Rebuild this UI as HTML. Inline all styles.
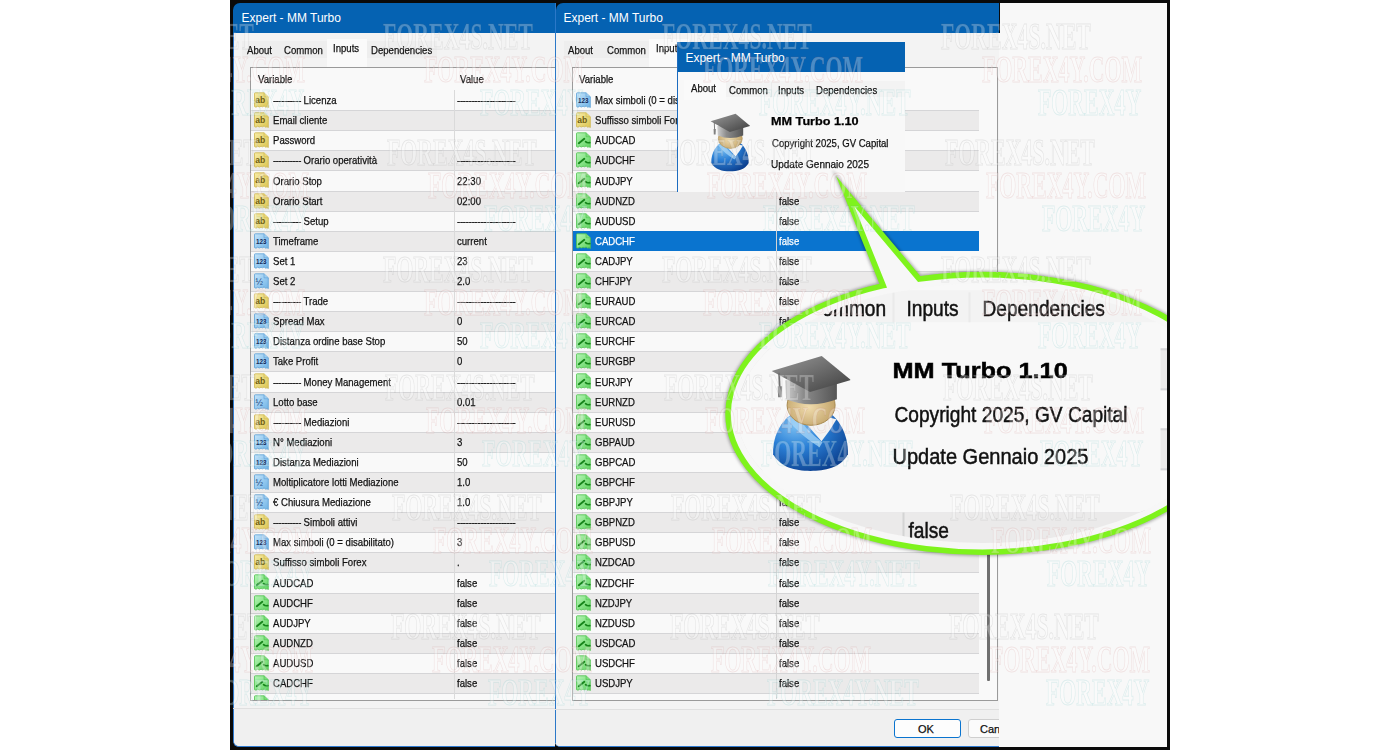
<!DOCTYPE html><html><head><meta charset="utf-8"><style>
html,body{margin:0;padding:0;width:1400px;height:750px;overflow:hidden;background:#fff;position:relative}
.r{position:absolute}
.t{position:absolute;white-space:nowrap;font-family:"Liberation Sans",sans-serif;transform-origin:0 0;-webkit-text-stroke:0.25px currentColor}
.d{letter-spacing:-0.45px}.dv{letter-spacing:-0.3px}
.ic{position:absolute;overflow:visible}
.wm{position:absolute;white-space:nowrap;font-family:"Liberation Serif",serif;font-weight:bold;font-size:38px;line-height:38px;color:rgba(255,255,255,0.28);transform-origin:0 0;transform:scaleX(.575)}
</style></head><body>
<svg width="0" height="0" style="position:absolute">
<defs>
<linearGradient id="gy" x1="0" y1="0" x2="1" y2="1"><stop offset="0" stop-color="#f7eca6"/><stop offset="1" stop-color="#dcc552"/></linearGradient>
<linearGradient id="gb" x1="0" y1="0" x2="1" y2="1"><stop offset="0" stop-color="#c4e4fa"/><stop offset="1" stop-color="#6fb3e6"/></linearGradient>
<linearGradient id="gg" x1="0" y1="0" x2="1" y2="1"><stop offset="0" stop-color="#b6f5b6"/><stop offset="1" stop-color="#5fd35f"/></linearGradient>
<symbol id="ic-ab" viewBox="0 0 16 16">
 <path d="M1.5,1.5 Q1.5,0.8 2.3,0.8 L11,0.8 L15.3,4.8 L15.3,15.6 L14,14.6 L12.6,15.3 L11.2,13.9 L9.6,14.8 L8,14.2 L6.3,15 L4.6,14.2 L3,15.2 L1.5,14.6 Z" fill="url(#gy)" stroke="#cdb54c" stroke-width="0.8"/>
 <path d="M11,0.8 L11,4.8 L15.3,4.8" fill="#e8d77a" stroke="#cdb54c" stroke-width="0.6"/>
 <text x="2.2" y="11.2" font-family="Liberation Sans" font-size="8.5" font-weight="bold" fill="#6e5d12" textLength="10" lengthAdjust="spacingAndGlyphs">ab</text>
</symbol>
<symbol id="ic-123" viewBox="0 0 16 16">
 <path d="M1.5,1.5 Q1.5,0.8 2.3,0.8 L11,0.8 L15.3,4.8 L15.3,15.6 L14,14.6 L12.6,15.3 L11.2,13.9 L9.6,14.8 L8,14.2 L6.3,15 L4.6,14.2 L3,15.2 L1.5,14.6 Z" fill="url(#gb)" stroke="#5b9fd6" stroke-width="0.8"/>
 <path d="M11,0.8 L11,4.8 L15.3,4.8" fill="#9ccbee" stroke="#5b9fd6" stroke-width="0.6"/>
 <text x="3" y="11.4" font-family="Liberation Sans" font-weight="bold" font-size="7" fill="#14295a" textLength="10.5" lengthAdjust="spacingAndGlyphs">123</text>
</symbol>
<symbol id="ic-half" viewBox="0 0 16 16">
 <path d="M1.5,1.5 Q1.5,0.8 2.3,0.8 L11,0.8 L15.3,4.8 L15.3,15.6 L14,14.6 L12.6,15.3 L11.2,13.9 L9.6,14.8 L8,14.2 L6.3,15 L4.6,14.2 L3,15.2 L1.5,14.6 Z" fill="url(#gb)" stroke="#5b9fd6" stroke-width="0.8"/>
 <path d="M11,0.8 L11,4.8 L15.3,4.8" fill="#9ccbee" stroke="#5b9fd6" stroke-width="0.6"/>
 <text x="2.5" y="11.5" font-family="Liberation Sans" font-size="9" fill="#24457a">½</text>
</symbol>
<symbol id="ic-g" viewBox="0 0 16 16">
 <path d="M1.5,1.5 Q1.5,0.8 2.3,0.8 L11,0.8 L15.3,4.8 L15.3,15.6 L14,14.6 L12.6,15.3 L11.2,13.9 L9.6,14.8 L8,14.2 L6.3,15 L4.6,14.2 L3,15.2 L1.5,14.6 Z" fill="url(#gg)" stroke="#4cc24c" stroke-width="0.8"/>
 <path d="M11,0.8 L11,4.8 L15.3,4.8" fill="#7bdc7b" stroke="#4cc24c" stroke-width="0.6"/>
 <path d="M3.8,11.2 L9.3,6.8" stroke="#16851a" stroke-width="1.9" stroke-linecap="round"/>
 <path d="M10.6,9.6 Q12,11.2 14.8,10.6" stroke="#16851a" stroke-width="1.7" fill="none" stroke-linecap="round"/>
</symbol>
<symbol id="grad" viewBox="0 0 40 60">
 <defs>
  <radialGradient id="body" cx="0.3" cy="0.25" r="0.85"><stop offset="0" stop-color="#7cc0f2"/><stop offset="0.45" stop-color="#2a7fd6"/><stop offset="1" stop-color="#0b3d8c"/></radialGradient>
  <radialGradient id="face" cx="0.45" cy="0.55" r="0.6"><stop offset="0" stop-color="#f0dcae"/><stop offset="1" stop-color="#bfa065"/></radialGradient>
  <linearGradient id="hat" x1="0" y1="0" x2="1" y2="1"><stop offset="0" stop-color="#9a9a9a"/><stop offset="1" stop-color="#3e3e3e"/></linearGradient>
  <linearGradient id="band" x1="0" y1="0" x2="1" y2="0"><stop offset="0" stop-color="#d0d0d0"/><stop offset="0.35" stop-color="#8c8c8c"/><stop offset="1" stop-color="#555"/></linearGradient>
 </defs>
 <path d="M1.3,50 C1,40 6,31.5 14,28 L27,28 C34,31 39,40 38.7,50 C35,57 27,58.3 20,58.3 C12,58.3 5,56.5 1.3,50 Z" fill="url(#body)"/>
 <path d="M14.5,31 L25.5,43.5 Q30,38 33,32.5 Q24,30 14.5,31 Z" fill="#f2f2f2"/>
 <path d="M8,32 Q14,40 24.5,46.5 L26,44 Q17,37.5 13,30 Z" fill="#a8d6f7" opacity="0.75"/>
 <ellipse cx="20.3" cy="25.5" rx="12" ry="10" fill="url(#face)" stroke="#a88a50" stroke-width="0.5"/>
 <path d="M7.3,13 L7.8,22.5 Q20,27.5 33.2,22.5 L33.2,12.5 Z" fill="url(#band)"/>
 <path d="M0.6,8.3 L25.6,0.8 L40.2,12.9 L19.8,18.9 Z" fill="url(#hat)"/>
 <path d="M4.3,9.3 L4.6,17" stroke="#707070" stroke-width="0.9"/>
 <path d="M3.6,16 L5.8,16 L5.6,21.5 L3.8,21.5 Z" fill="#808080"/>
</symbol>
</defs></svg>
<div class="r" style="left:230px;top:0px;width:940px;height:750px;background:#0a0a0a"></div><div class="r" style="left:1000px;top:3px;width:167px;height:744px;background:#f8f8f8"></div><div class="r" style="left:233px;top:20px;width:322px;height:727px;background:#f3f3f3;border-left:1px solid #2f7ad0;border-bottom:1px solid #2f7ad0;border-bottom-left-radius:6px;box-sizing:border-box"></div><div class="r" style="left:234px;top:709px;width:321px;height:37px;background:#f0f0f0;border-bottom-left-radius:5px"></div><div class="r" style="left:233px;top:3px;width:322px;height:30px;background:#0562b2;border-top-left-radius:7px"></div><div class="t" style="left:241.60px;top:11.94px;font-size:12px;line-height:12px;font-weight:normal;color:#fff;-webkit-text-stroke:0;">Expert - MM Turbo</div><div class="r" style="left:242px;top:41px;width:85px;height:17px;background:#eeeeee"></div><div class="r" style="left:367px;top:41px;width:70px;height:17px;background:#eeeeee"></div><div class="r" style="left:327px;top:39px;width:40px;height:29px;background:#fafafa"></div><div class="t" style="left:246.50px;top:44.99px;font-size:11px;line-height:11px;font-weight:normal;color:#111;transform:scaleX(0.87);">About</div><div class="t" style="left:284.40px;top:44.99px;font-size:11px;line-height:11px;font-weight:normal;color:#111;transform:scaleX(0.87);">Common</div><div class="t" style="left:333.00px;top:42.99px;font-size:11px;line-height:11px;font-weight:normal;color:#111;transform:scaleX(0.87);">Inputs</div><div class="t" style="left:371.00px;top:44.99px;font-size:11px;line-height:11px;font-weight:normal;color:#111;transform:scaleX(0.87);">Dependencies</div><div class="r" style="left:250px;top:67px;width:320px;height:634px;background:#f9f9f9;border:1px solid #9a9a9a;box-sizing:border-box"></div><div class="t" style="left:258.00px;top:74.49px;font-size:11px;line-height:11px;font-weight:normal;color:#111;transform:scaleX(0.87);">Variable</div><div class="t" style="left:460.00px;top:73.99px;font-size:11px;line-height:11px;font-weight:normal;color:#111;transform:scaleX(0.87);">Value</div><div class=r style="left:0;top:0;width:555px;height:700px;overflow:hidden"><svg class="ic" style="left:253px;top:92px" width="16" height="16"><use href="#ic-ab"/></svg><div class="t" style="left:273.00px;top:95.19px;font-size:11px;line-height:11px;font-weight:normal;color:#111;transform:scaleX(0.87);"><span class=d>----------</span> Licenza</div><div class="t" style="left:457.00px;top:95.19px;font-size:11px;line-height:11px;font-weight:normal;color:#111;transform:scaleX(0.87);"><span class=dv>--------------------</span></div><div class="r" style="left:251px;top:110px;width:309px;height:21px;background:#ebeaea;border-top:1px solid #d5d5d7;border-bottom:1px solid #d5d5d7;box-sizing:border-box"></div><svg class="ic" style="left:253px;top:112px" width="16" height="16"><use href="#ic-ab"/></svg><div class="t" style="left:273.00px;top:115.19px;font-size:11px;line-height:11px;font-weight:normal;color:#111;transform:scaleX(0.87);">Email cliente</div><svg class="ic" style="left:253px;top:132px" width="16" height="16"><use href="#ic-ab"/></svg><div class="t" style="left:273.00px;top:135.19px;font-size:11px;line-height:11px;font-weight:normal;color:#111;transform:scaleX(0.87);">Password</div><div class="r" style="left:251px;top:150px;width:309px;height:21px;background:#ebeaea;border-top:1px solid #d5d5d7;border-bottom:1px solid #d5d5d7;box-sizing:border-box"></div><svg class="ic" style="left:253px;top:152px" width="16" height="16"><use href="#ic-ab"/></svg><div class="t" style="left:273.00px;top:155.19px;font-size:11px;line-height:11px;font-weight:normal;color:#111;transform:scaleX(0.87);"><span class=d>----------</span> Orario operatività</div><div class="t" style="left:457.00px;top:155.19px;font-size:11px;line-height:11px;font-weight:normal;color:#111;transform:scaleX(0.87);"><span class=dv>--------------------</span></div><svg class="ic" style="left:253px;top:172px" width="16" height="16"><use href="#ic-ab"/></svg><div class="t" style="left:273.00px;top:175.69px;font-size:11px;line-height:11px;font-weight:normal;color:#111;transform:scaleX(0.87);">Orario Stop</div><div class="t" style="left:457.00px;top:175.69px;font-size:11px;line-height:11px;font-weight:normal;color:#111;transform:scaleX(0.87);">22:30</div><div class="r" style="left:251px;top:191px;width:309px;height:21px;background:#ebeaea;border-top:1px solid #d5d5d7;border-bottom:1px solid #d5d5d7;box-sizing:border-box"></div><svg class="ic" style="left:253px;top:193px" width="16" height="16"><use href="#ic-ab"/></svg><div class="t" style="left:273.00px;top:196.19px;font-size:11px;line-height:11px;font-weight:normal;color:#111;transform:scaleX(0.87);">Orario Start</div><div class="t" style="left:457.00px;top:196.19px;font-size:11px;line-height:11px;font-weight:normal;color:#111;transform:scaleX(0.87);">02:00</div><svg class="ic" style="left:253px;top:213px" width="16" height="16"><use href="#ic-ab"/></svg><div class="t" style="left:273.00px;top:216.19px;font-size:11px;line-height:11px;font-weight:normal;color:#111;transform:scaleX(0.87);"><span class=d>----------</span> Setup</div><div class="t" style="left:457.00px;top:216.19px;font-size:11px;line-height:11px;font-weight:normal;color:#111;transform:scaleX(0.87);"><span class=dv>--------------------</span></div><div class="r" style="left:251px;top:231px;width:309px;height:21px;background:#ebeaea;border-top:1px solid #d5d5d7;border-bottom:1px solid #d5d5d7;box-sizing:border-box"></div><svg class="ic" style="left:253px;top:233px" width="16" height="16"><use href="#ic-123"/></svg><div class="t" style="left:273.00px;top:236.19px;font-size:11px;line-height:11px;font-weight:normal;color:#111;transform:scaleX(0.87);">Timeframe</div><div class="t" style="left:457.00px;top:236.19px;font-size:11px;line-height:11px;font-weight:normal;color:#111;transform:scaleX(0.87);">current</div><svg class="ic" style="left:253px;top:253px" width="16" height="16"><use href="#ic-123"/></svg><div class="t" style="left:273.00px;top:256.19px;font-size:11px;line-height:11px;font-weight:normal;color:#111;transform:scaleX(0.87);">Set 1</div><div class="t" style="left:457.00px;top:256.19px;font-size:11px;line-height:11px;font-weight:normal;color:#111;transform:scaleX(0.87);">23</div><div class="r" style="left:251px;top:271px;width:309px;height:21px;background:#ebeaea;border-top:1px solid #d5d5d7;border-bottom:1px solid #d5d5d7;box-sizing:border-box"></div><svg class="ic" style="left:253px;top:273px" width="16" height="16"><use href="#ic-half"/></svg><div class="t" style="left:273.00px;top:276.19px;font-size:11px;line-height:11px;font-weight:normal;color:#111;transform:scaleX(0.87);">Set 2</div><div class="t" style="left:457.00px;top:276.19px;font-size:11px;line-height:11px;font-weight:normal;color:#111;transform:scaleX(0.87);">2.0</div><svg class="ic" style="left:253px;top:293px" width="16" height="16"><use href="#ic-ab"/></svg><div class="t" style="left:273.00px;top:296.19px;font-size:11px;line-height:11px;font-weight:normal;color:#111;transform:scaleX(0.87);"><span class=d>----------</span> Trade</div><div class="t" style="left:457.00px;top:296.19px;font-size:11px;line-height:11px;font-weight:normal;color:#111;transform:scaleX(0.87);"><span class=dv>--------------------</span></div><div class="r" style="left:251px;top:311px;width:309px;height:21px;background:#ebeaea;border-top:1px solid #d5d5d7;border-bottom:1px solid #d5d5d7;box-sizing:border-box"></div><svg class="ic" style="left:253px;top:313px" width="16" height="16"><use href="#ic-123"/></svg><div class="t" style="left:273.00px;top:316.19px;font-size:11px;line-height:11px;font-weight:normal;color:#111;transform:scaleX(0.87);">Spread Max</div><div class="t" style="left:457.00px;top:316.19px;font-size:11px;line-height:11px;font-weight:normal;color:#111;transform:scaleX(0.87);">0</div><svg class="ic" style="left:253px;top:333px" width="16" height="16"><use href="#ic-123"/></svg><div class="t" style="left:273.00px;top:336.19px;font-size:11px;line-height:11px;font-weight:normal;color:#111;transform:scaleX(0.87);">Distanza ordine base Stop</div><div class="t" style="left:457.00px;top:336.19px;font-size:11px;line-height:11px;font-weight:normal;color:#111;transform:scaleX(0.87);">50</div><div class="r" style="left:251px;top:351px;width:309px;height:21px;background:#ebeaea;border-top:1px solid #d5d5d7;border-bottom:1px solid #d5d5d7;box-sizing:border-box"></div><svg class="ic" style="left:253px;top:353px" width="16" height="16"><use href="#ic-123"/></svg><div class="t" style="left:273.00px;top:356.19px;font-size:11px;line-height:11px;font-weight:normal;color:#111;transform:scaleX(0.87);">Take Profit</div><div class="t" style="left:457.00px;top:356.19px;font-size:11px;line-height:11px;font-weight:normal;color:#111;transform:scaleX(0.87);">0</div><svg class="ic" style="left:253px;top:373px" width="16" height="16"><use href="#ic-ab"/></svg><div class="t" style="left:273.00px;top:376.69px;font-size:11px;line-height:11px;font-weight:normal;color:#111;transform:scaleX(0.87);"><span class=d>----------</span> Money Management</div><div class="t" style="left:457.00px;top:376.69px;font-size:11px;line-height:11px;font-weight:normal;color:#111;transform:scaleX(0.87);"><span class=dv>--------------------</span></div><div class="r" style="left:251px;top:392px;width:309px;height:21px;background:#ebeaea;border-top:1px solid #d5d5d7;border-bottom:1px solid #d5d5d7;box-sizing:border-box"></div><svg class="ic" style="left:253px;top:394px" width="16" height="16"><use href="#ic-half"/></svg><div class="t" style="left:273.00px;top:397.19px;font-size:11px;line-height:11px;font-weight:normal;color:#111;transform:scaleX(0.87);">Lotto base</div><div class="t" style="left:457.00px;top:397.19px;font-size:11px;line-height:11px;font-weight:normal;color:#111;transform:scaleX(0.87);">0.01</div><svg class="ic" style="left:253px;top:414px" width="16" height="16"><use href="#ic-ab"/></svg><div class="t" style="left:273.00px;top:417.19px;font-size:11px;line-height:11px;font-weight:normal;color:#111;transform:scaleX(0.87);"><span class=d>----------</span> Mediazioni</div><div class="t" style="left:457.00px;top:417.19px;font-size:11px;line-height:11px;font-weight:normal;color:#111;transform:scaleX(0.87);"><span class=dv>--------------------</span></div><div class="r" style="left:251px;top:432px;width:309px;height:21px;background:#ebeaea;border-top:1px solid #d5d5d7;border-bottom:1px solid #d5d5d7;box-sizing:border-box"></div><svg class="ic" style="left:253px;top:434px" width="16" height="16"><use href="#ic-123"/></svg><div class="t" style="left:273.00px;top:437.19px;font-size:11px;line-height:11px;font-weight:normal;color:#111;transform:scaleX(0.87);">N° Mediazioni</div><div class="t" style="left:457.00px;top:437.19px;font-size:11px;line-height:11px;font-weight:normal;color:#111;transform:scaleX(0.87);">3</div><svg class="ic" style="left:253px;top:454px" width="16" height="16"><use href="#ic-123"/></svg><div class="t" style="left:273.00px;top:457.19px;font-size:11px;line-height:11px;font-weight:normal;color:#111;transform:scaleX(0.87);">Distanza Mediazioni</div><div class="t" style="left:457.00px;top:457.19px;font-size:11px;line-height:11px;font-weight:normal;color:#111;transform:scaleX(0.87);">50</div><div class="r" style="left:251px;top:472px;width:309px;height:21px;background:#ebeaea;border-top:1px solid #d5d5d7;border-bottom:1px solid #d5d5d7;box-sizing:border-box"></div><svg class="ic" style="left:253px;top:474px" width="16" height="16"><use href="#ic-half"/></svg><div class="t" style="left:273.00px;top:477.19px;font-size:11px;line-height:11px;font-weight:normal;color:#111;transform:scaleX(0.87);">Moltiplicatore lotti Mediazione</div><div class="t" style="left:457.00px;top:477.19px;font-size:11px;line-height:11px;font-weight:normal;color:#111;transform:scaleX(0.87);">1.0</div><svg class="ic" style="left:253px;top:494px" width="16" height="16"><use href="#ic-half"/></svg><div class="t" style="left:273.00px;top:497.19px;font-size:11px;line-height:11px;font-weight:normal;color:#111;transform:scaleX(0.87);">€ Chiusura Mediazione</div><div class="t" style="left:457.00px;top:497.19px;font-size:11px;line-height:11px;font-weight:normal;color:#111;transform:scaleX(0.87);">1.0</div><div class="r" style="left:251px;top:512px;width:309px;height:21px;background:#ebeaea;border-top:1px solid #d5d5d7;border-bottom:1px solid #d5d5d7;box-sizing:border-box"></div><svg class="ic" style="left:253px;top:514px" width="16" height="16"><use href="#ic-ab"/></svg><div class="t" style="left:273.00px;top:517.19px;font-size:11px;line-height:11px;font-weight:normal;color:#111;transform:scaleX(0.87);"><span class=d>----------</span> Simboli attivi</div><div class="t" style="left:457.00px;top:517.19px;font-size:11px;line-height:11px;font-weight:normal;color:#111;transform:scaleX(0.87);"><span class=dv>--------------------</span></div><svg class="ic" style="left:253px;top:534px" width="16" height="16"><use href="#ic-123"/></svg><div class="t" style="left:273.00px;top:537.19px;font-size:11px;line-height:11px;font-weight:normal;color:#111;transform:scaleX(0.87);">Max simboli (0 = disabilitato)</div><div class="t" style="left:457.00px;top:537.19px;font-size:11px;line-height:11px;font-weight:normal;color:#111;transform:scaleX(0.87);">3</div><div class="r" style="left:251px;top:552px;width:309px;height:21px;background:#ebeaea;border-top:1px solid #d5d5d7;border-bottom:1px solid #d5d5d7;box-sizing:border-box"></div><svg class="ic" style="left:253px;top:554px" width="16" height="16"><use href="#ic-ab"/></svg><div class="t" style="left:273.00px;top:557.19px;font-size:11px;line-height:11px;font-weight:normal;color:#111;transform:scaleX(0.87);">Suffisso simboli Forex</div><div class="t" style="left:457.00px;top:557.19px;font-size:11px;line-height:11px;font-weight:normal;color:#111;transform:scaleX(0.87);">.</div><svg class="ic" style="left:253px;top:574px" width="16" height="16"><use href="#ic-g"/></svg><div class="t" style="left:273.00px;top:577.69px;font-size:11px;line-height:11px;font-weight:normal;color:#111;transform:scaleX(0.87);">AUDCAD</div><div class="t" style="left:457.00px;top:577.69px;font-size:11px;line-height:11px;font-weight:normal;color:#111;transform:scaleX(0.87);">false</div><div class="r" style="left:251px;top:593px;width:309px;height:21px;background:#ebeaea;border-top:1px solid #d5d5d7;border-bottom:1px solid #d5d5d7;box-sizing:border-box"></div><svg class="ic" style="left:253px;top:595px" width="16" height="16"><use href="#ic-g"/></svg><div class="t" style="left:273.00px;top:598.19px;font-size:11px;line-height:11px;font-weight:normal;color:#111;transform:scaleX(0.87);">AUDCHF</div><div class="t" style="left:457.00px;top:598.19px;font-size:11px;line-height:11px;font-weight:normal;color:#111;transform:scaleX(0.87);">false</div><svg class="ic" style="left:253px;top:615px" width="16" height="16"><use href="#ic-g"/></svg><div class="t" style="left:273.00px;top:618.19px;font-size:11px;line-height:11px;font-weight:normal;color:#111;transform:scaleX(0.87);">AUDJPY</div><div class="t" style="left:457.00px;top:618.19px;font-size:11px;line-height:11px;font-weight:normal;color:#111;transform:scaleX(0.87);">false</div><div class="r" style="left:251px;top:633px;width:309px;height:21px;background:#ebeaea;border-top:1px solid #d5d5d7;border-bottom:1px solid #d5d5d7;box-sizing:border-box"></div><svg class="ic" style="left:253px;top:635px" width="16" height="16"><use href="#ic-g"/></svg><div class="t" style="left:273.00px;top:638.19px;font-size:11px;line-height:11px;font-weight:normal;color:#111;transform:scaleX(0.87);">AUDNZD</div><div class="t" style="left:457.00px;top:638.19px;font-size:11px;line-height:11px;font-weight:normal;color:#111;transform:scaleX(0.87);">false</div><svg class="ic" style="left:253px;top:655px" width="16" height="16"><use href="#ic-g"/></svg><div class="t" style="left:273.00px;top:658.19px;font-size:11px;line-height:11px;font-weight:normal;color:#111;transform:scaleX(0.87);">AUDUSD</div><div class="t" style="left:457.00px;top:658.19px;font-size:11px;line-height:11px;font-weight:normal;color:#111;transform:scaleX(0.87);">false</div><div class="r" style="left:251px;top:673px;width:309px;height:21px;background:#ebeaea;border-top:1px solid #d5d5d7;border-bottom:1px solid #d5d5d7;box-sizing:border-box"></div><svg class="ic" style="left:253px;top:675px" width="16" height="16"><use href="#ic-g"/></svg><div class="t" style="left:273.00px;top:678.19px;font-size:11px;line-height:11px;font-weight:normal;color:#111;transform:scaleX(0.87);">CADCHF</div><div class="t" style="left:457.00px;top:678.19px;font-size:11px;line-height:11px;font-weight:normal;color:#111;transform:scaleX(0.87);">false</div><svg class="ic" style="left:253px;top:695px" width="16" height="16"><use href="#ic-g"/></svg></div><div class="r" style="left:454px;top:90px;width:1px;height:609px;background:#dadada"></div><div class="r" style="left:233px;top:708px;width:322px;height:1px;background:#e0e0e0"></div><div class="r" style="left:555px;top:20px;width:444px;height:727px;background:#f3f3f3;border-bottom:1px solid #2f7ad0;border-bottom-left-radius:5px;box-sizing:border-box"></div><div class="r" style="left:556px;top:710px;width:443px;height:36px;background:#f0f0f0;border-bottom-left-radius:4px"></div><div class="r" style="left:555px;top:3px;width:1px;height:740px;background:#2b78c8"></div><div class="r" style="left:556px;top:3px;width:443px;height:30px;background:#0562b2;border-top-left-radius:7px"></div><div class="t" style="left:563.50px;top:11.94px;font-size:12px;line-height:12px;font-weight:normal;color:#fff;-webkit-text-stroke:0;">Expert - MM Turbo</div><div class="r" style="left:564px;top:41px;width:85px;height:17px;background:#eeeeee"></div><div class="r" style="left:689px;top:41px;width:70px;height:17px;background:#eeeeee"></div><div class="r" style="left:649px;top:39px;width:40px;height:29px;background:#fafafa"></div><div class="t" style="left:568.00px;top:44.99px;font-size:11px;line-height:11px;font-weight:normal;color:#111;transform:scaleX(0.87);">About</div><div class="t" style="left:606.50px;top:44.99px;font-size:11px;line-height:11px;font-weight:normal;color:#111;transform:scaleX(0.87);">Common</div><div class="t" style="left:655.60px;top:42.99px;font-size:11px;line-height:11px;font-weight:normal;color:#111;transform:scaleX(0.87);">Inputs</div><div class="t" style="left:694.00px;top:44.99px;font-size:11px;line-height:11px;font-weight:normal;color:#111;transform:scaleX(0.87);">Dependencies</div><div class="r" style="left:572px;top:67px;width:426px;height:634px;background:#f9f9f9;border:1px solid #9a9a9a;box-sizing:border-box"></div><div class="t" style="left:579.00px;top:74.49px;font-size:11px;line-height:11px;font-weight:normal;color:#111;transform:scaleX(0.87);">Variable</div><div class="t" style="left:782.00px;top:73.99px;font-size:11px;line-height:11px;font-weight:normal;color:#111;transform:scaleX(0.87);">Value</div><div class=r style="left:0;top:0;width:999px;height:700px;overflow:hidden"><svg class="ic" style="left:575px;top:92px" width="16" height="16"><use href="#ic-123"/></svg><div class="t" style="left:595.00px;top:95.19px;font-size:11px;line-height:11px;font-weight:normal;color:#111;transform:scaleX(0.87);">Max simboli (0 = disabilitato)</div><div class="t" style="left:779.00px;top:95.19px;font-size:11px;line-height:11px;font-weight:normal;color:#111;transform:scaleX(0.87);">3</div><div class="r" style="left:573px;top:110px;width:406px;height:21px;background:#ebeaea;border-top:1px solid #d5d5d7;border-bottom:1px solid #d5d5d7;box-sizing:border-box"></div><svg class="ic" style="left:575px;top:112px" width="16" height="16"><use href="#ic-ab"/></svg><div class="t" style="left:595.00px;top:115.19px;font-size:11px;line-height:11px;font-weight:normal;color:#111;transform:scaleX(0.87);">Suffisso simboli Forex</div><div class="t" style="left:779.00px;top:115.19px;font-size:11px;line-height:11px;font-weight:normal;color:#111;transform:scaleX(0.87);">.</div><svg class="ic" style="left:575px;top:132px" width="16" height="16"><use href="#ic-g"/></svg><div class="t" style="left:595.00px;top:135.19px;font-size:11px;line-height:11px;font-weight:normal;color:#111;transform:scaleX(0.87);">AUDCAD</div><div class="t" style="left:779.00px;top:135.19px;font-size:11px;line-height:11px;font-weight:normal;color:#111;transform:scaleX(0.87);">false</div><div class="r" style="left:573px;top:150px;width:406px;height:21px;background:#ebeaea;border-top:1px solid #d5d5d7;border-bottom:1px solid #d5d5d7;box-sizing:border-box"></div><svg class="ic" style="left:575px;top:152px" width="16" height="16"><use href="#ic-g"/></svg><div class="t" style="left:595.00px;top:155.19px;font-size:11px;line-height:11px;font-weight:normal;color:#111;transform:scaleX(0.87);">AUDCHF</div><div class="t" style="left:779.00px;top:155.19px;font-size:11px;line-height:11px;font-weight:normal;color:#111;transform:scaleX(0.87);">false</div><svg class="ic" style="left:575px;top:172px" width="16" height="16"><use href="#ic-g"/></svg><div class="t" style="left:595.00px;top:175.69px;font-size:11px;line-height:11px;font-weight:normal;color:#111;transform:scaleX(0.87);">AUDJPY</div><div class="t" style="left:779.00px;top:175.69px;font-size:11px;line-height:11px;font-weight:normal;color:#111;transform:scaleX(0.87);">false</div><div class="r" style="left:573px;top:191px;width:406px;height:21px;background:#ebeaea;border-top:1px solid #d5d5d7;border-bottom:1px solid #d5d5d7;box-sizing:border-box"></div><svg class="ic" style="left:575px;top:193px" width="16" height="16"><use href="#ic-g"/></svg><div class="t" style="left:595.00px;top:196.19px;font-size:11px;line-height:11px;font-weight:normal;color:#111;transform:scaleX(0.87);">AUDNZD</div><div class="t" style="left:779.00px;top:196.19px;font-size:11px;line-height:11px;font-weight:normal;color:#111;transform:scaleX(0.87);">false</div><svg class="ic" style="left:575px;top:213px" width="16" height="16"><use href="#ic-g"/></svg><div class="t" style="left:595.00px;top:216.19px;font-size:11px;line-height:11px;font-weight:normal;color:#111;transform:scaleX(0.87);">AUDUSD</div><div class="t" style="left:779.00px;top:216.19px;font-size:11px;line-height:11px;font-weight:normal;color:#111;transform:scaleX(0.87);">false</div><div class="r" style="left:573px;top:231px;width:406px;height:20px;background:#0a74cf"></div><svg class="ic" style="left:575px;top:233px" width="16" height="16"><use href="#ic-g"/></svg><div class="t" style="left:595.00px;top:236.19px;font-size:11px;line-height:11px;font-weight:normal;color:#fff;transform:scaleX(0.87);">CADCHF</div><div class="t" style="left:779.00px;top:236.19px;font-size:11px;line-height:11px;font-weight:normal;color:#fff;transform:scaleX(0.87);">false</div><svg class="ic" style="left:575px;top:253px" width="16" height="16"><use href="#ic-g"/></svg><div class="t" style="left:595.00px;top:256.19px;font-size:11px;line-height:11px;font-weight:normal;color:#111;transform:scaleX(0.87);">CADJPY</div><div class="t" style="left:779.00px;top:256.19px;font-size:11px;line-height:11px;font-weight:normal;color:#111;transform:scaleX(0.87);">false</div><div class="r" style="left:573px;top:271px;width:406px;height:21px;background:#ebeaea;border-top:1px solid #d5d5d7;border-bottom:1px solid #d5d5d7;box-sizing:border-box"></div><svg class="ic" style="left:575px;top:273px" width="16" height="16"><use href="#ic-g"/></svg><div class="t" style="left:595.00px;top:276.19px;font-size:11px;line-height:11px;font-weight:normal;color:#111;transform:scaleX(0.87);">CHFJPY</div><div class="t" style="left:779.00px;top:276.19px;font-size:11px;line-height:11px;font-weight:normal;color:#111;transform:scaleX(0.87);">false</div><svg class="ic" style="left:575px;top:293px" width="16" height="16"><use href="#ic-g"/></svg><div class="t" style="left:595.00px;top:296.19px;font-size:11px;line-height:11px;font-weight:normal;color:#111;transform:scaleX(0.87);">EURAUD</div><div class="t" style="left:779.00px;top:296.19px;font-size:11px;line-height:11px;font-weight:normal;color:#111;transform:scaleX(0.87);">false</div><div class="r" style="left:573px;top:311px;width:406px;height:21px;background:#ebeaea;border-top:1px solid #d5d5d7;border-bottom:1px solid #d5d5d7;box-sizing:border-box"></div><svg class="ic" style="left:575px;top:313px" width="16" height="16"><use href="#ic-g"/></svg><div class="t" style="left:595.00px;top:316.19px;font-size:11px;line-height:11px;font-weight:normal;color:#111;transform:scaleX(0.87);">EURCAD</div><div class="t" style="left:779.00px;top:316.19px;font-size:11px;line-height:11px;font-weight:normal;color:#111;transform:scaleX(0.87);">false</div><svg class="ic" style="left:575px;top:333px" width="16" height="16"><use href="#ic-g"/></svg><div class="t" style="left:595.00px;top:336.19px;font-size:11px;line-height:11px;font-weight:normal;color:#111;transform:scaleX(0.87);">EURCHF</div><div class="t" style="left:779.00px;top:336.19px;font-size:11px;line-height:11px;font-weight:normal;color:#111;transform:scaleX(0.87);">false</div><div class="r" style="left:573px;top:351px;width:406px;height:21px;background:#ebeaea;border-top:1px solid #d5d5d7;border-bottom:1px solid #d5d5d7;box-sizing:border-box"></div><svg class="ic" style="left:575px;top:353px" width="16" height="16"><use href="#ic-g"/></svg><div class="t" style="left:595.00px;top:356.19px;font-size:11px;line-height:11px;font-weight:normal;color:#111;transform:scaleX(0.87);">EURGBP</div><div class="t" style="left:779.00px;top:356.19px;font-size:11px;line-height:11px;font-weight:normal;color:#111;transform:scaleX(0.87);">false</div><svg class="ic" style="left:575px;top:373px" width="16" height="16"><use href="#ic-g"/></svg><div class="t" style="left:595.00px;top:376.69px;font-size:11px;line-height:11px;font-weight:normal;color:#111;transform:scaleX(0.87);">EURJPY</div><div class="t" style="left:779.00px;top:376.69px;font-size:11px;line-height:11px;font-weight:normal;color:#111;transform:scaleX(0.87);">false</div><div class="r" style="left:573px;top:392px;width:406px;height:21px;background:#ebeaea;border-top:1px solid #d5d5d7;border-bottom:1px solid #d5d5d7;box-sizing:border-box"></div><svg class="ic" style="left:575px;top:394px" width="16" height="16"><use href="#ic-g"/></svg><div class="t" style="left:595.00px;top:397.19px;font-size:11px;line-height:11px;font-weight:normal;color:#111;transform:scaleX(0.87);">EURNZD</div><div class="t" style="left:779.00px;top:397.19px;font-size:11px;line-height:11px;font-weight:normal;color:#111;transform:scaleX(0.87);">false</div><svg class="ic" style="left:575px;top:414px" width="16" height="16"><use href="#ic-g"/></svg><div class="t" style="left:595.00px;top:417.19px;font-size:11px;line-height:11px;font-weight:normal;color:#111;transform:scaleX(0.87);">EURUSD</div><div class="t" style="left:779.00px;top:417.19px;font-size:11px;line-height:11px;font-weight:normal;color:#111;transform:scaleX(0.87);">false</div><div class="r" style="left:573px;top:432px;width:406px;height:21px;background:#ebeaea;border-top:1px solid #d5d5d7;border-bottom:1px solid #d5d5d7;box-sizing:border-box"></div><svg class="ic" style="left:575px;top:434px" width="16" height="16"><use href="#ic-g"/></svg><div class="t" style="left:595.00px;top:437.19px;font-size:11px;line-height:11px;font-weight:normal;color:#111;transform:scaleX(0.87);">GBPAUD</div><div class="t" style="left:779.00px;top:437.19px;font-size:11px;line-height:11px;font-weight:normal;color:#111;transform:scaleX(0.87);">false</div><svg class="ic" style="left:575px;top:454px" width="16" height="16"><use href="#ic-g"/></svg><div class="t" style="left:595.00px;top:457.19px;font-size:11px;line-height:11px;font-weight:normal;color:#111;transform:scaleX(0.87);">GBPCAD</div><div class="t" style="left:779.00px;top:457.19px;font-size:11px;line-height:11px;font-weight:normal;color:#111;transform:scaleX(0.87);">false</div><div class="r" style="left:573px;top:472px;width:406px;height:21px;background:#ebeaea;border-top:1px solid #d5d5d7;border-bottom:1px solid #d5d5d7;box-sizing:border-box"></div><svg class="ic" style="left:575px;top:474px" width="16" height="16"><use href="#ic-g"/></svg><div class="t" style="left:595.00px;top:477.19px;font-size:11px;line-height:11px;font-weight:normal;color:#111;transform:scaleX(0.87);">GBPCHF</div><div class="t" style="left:779.00px;top:477.19px;font-size:11px;line-height:11px;font-weight:normal;color:#111;transform:scaleX(0.87);">false</div><svg class="ic" style="left:575px;top:494px" width="16" height="16"><use href="#ic-g"/></svg><div class="t" style="left:595.00px;top:497.19px;font-size:11px;line-height:11px;font-weight:normal;color:#111;transform:scaleX(0.87);">GBPJPY</div><div class="t" style="left:779.00px;top:497.19px;font-size:11px;line-height:11px;font-weight:normal;color:#111;transform:scaleX(0.87);">false</div><div class="r" style="left:573px;top:512px;width:406px;height:21px;background:#ebeaea;border-top:1px solid #d5d5d7;border-bottom:1px solid #d5d5d7;box-sizing:border-box"></div><svg class="ic" style="left:575px;top:514px" width="16" height="16"><use href="#ic-g"/></svg><div class="t" style="left:595.00px;top:517.19px;font-size:11px;line-height:11px;font-weight:normal;color:#111;transform:scaleX(0.87);">GBPNZD</div><div class="t" style="left:779.00px;top:517.19px;font-size:11px;line-height:11px;font-weight:normal;color:#111;transform:scaleX(0.87);">false</div><svg class="ic" style="left:575px;top:534px" width="16" height="16"><use href="#ic-g"/></svg><div class="t" style="left:595.00px;top:537.19px;font-size:11px;line-height:11px;font-weight:normal;color:#111;transform:scaleX(0.87);">GBPUSD</div><div class="t" style="left:779.00px;top:537.19px;font-size:11px;line-height:11px;font-weight:normal;color:#111;transform:scaleX(0.87);">false</div><div class="r" style="left:573px;top:552px;width:406px;height:21px;background:#ebeaea;border-top:1px solid #d5d5d7;border-bottom:1px solid #d5d5d7;box-sizing:border-box"></div><svg class="ic" style="left:575px;top:554px" width="16" height="16"><use href="#ic-g"/></svg><div class="t" style="left:595.00px;top:557.19px;font-size:11px;line-height:11px;font-weight:normal;color:#111;transform:scaleX(0.87);">NZDCAD</div><div class="t" style="left:779.00px;top:557.19px;font-size:11px;line-height:11px;font-weight:normal;color:#111;transform:scaleX(0.87);">false</div><svg class="ic" style="left:575px;top:574px" width="16" height="16"><use href="#ic-g"/></svg><div class="t" style="left:595.00px;top:577.69px;font-size:11px;line-height:11px;font-weight:normal;color:#111;transform:scaleX(0.87);">NZDCHF</div><div class="t" style="left:779.00px;top:577.69px;font-size:11px;line-height:11px;font-weight:normal;color:#111;transform:scaleX(0.87);">false</div><div class="r" style="left:573px;top:593px;width:406px;height:21px;background:#ebeaea;border-top:1px solid #d5d5d7;border-bottom:1px solid #d5d5d7;box-sizing:border-box"></div><svg class="ic" style="left:575px;top:595px" width="16" height="16"><use href="#ic-g"/></svg><div class="t" style="left:595.00px;top:598.19px;font-size:11px;line-height:11px;font-weight:normal;color:#111;transform:scaleX(0.87);">NZDJPY</div><div class="t" style="left:779.00px;top:598.19px;font-size:11px;line-height:11px;font-weight:normal;color:#111;transform:scaleX(0.87);">false</div><svg class="ic" style="left:575px;top:615px" width="16" height="16"><use href="#ic-g"/></svg><div class="t" style="left:595.00px;top:618.19px;font-size:11px;line-height:11px;font-weight:normal;color:#111;transform:scaleX(0.87);">NZDUSD</div><div class="t" style="left:779.00px;top:618.19px;font-size:11px;line-height:11px;font-weight:normal;color:#111;transform:scaleX(0.87);">false</div><div class="r" style="left:573px;top:633px;width:406px;height:21px;background:#ebeaea;border-top:1px solid #d5d5d7;border-bottom:1px solid #d5d5d7;box-sizing:border-box"></div><svg class="ic" style="left:575px;top:635px" width="16" height="16"><use href="#ic-g"/></svg><div class="t" style="left:595.00px;top:638.19px;font-size:11px;line-height:11px;font-weight:normal;color:#111;transform:scaleX(0.87);">USDCAD</div><div class="t" style="left:779.00px;top:638.19px;font-size:11px;line-height:11px;font-weight:normal;color:#111;transform:scaleX(0.87);">false</div><svg class="ic" style="left:575px;top:655px" width="16" height="16"><use href="#ic-g"/></svg><div class="t" style="left:595.00px;top:658.19px;font-size:11px;line-height:11px;font-weight:normal;color:#111;transform:scaleX(0.87);">USDCHF</div><div class="t" style="left:779.00px;top:658.19px;font-size:11px;line-height:11px;font-weight:normal;color:#111;transform:scaleX(0.87);">false</div><div class="r" style="left:573px;top:673px;width:406px;height:21px;background:#ebeaea;border-top:1px solid #d5d5d7;border-bottom:1px solid #d5d5d7;box-sizing:border-box"></div><svg class="ic" style="left:575px;top:675px" width="16" height="16"><use href="#ic-g"/></svg><div class="t" style="left:595.00px;top:678.19px;font-size:11px;line-height:11px;font-weight:normal;color:#111;transform:scaleX(0.87);">USDJPY</div><div class="t" style="left:779.00px;top:678.19px;font-size:11px;line-height:11px;font-weight:normal;color:#111;transform:scaleX(0.87);">false</div></div><div class="r" style="left:776px;top:90px;width:1px;height:609px;background:#d4d4d4"></div><div class="r" style="left:987px;top:540px;width:3px;height:141px;background:#6f6f6f;border-radius:1px"></div><div class="r" style="left:555px;top:709px;width:444px;height:1px;background:#e0e0e0"></div><div class="r" style="left:893.5px;top:719px;width:67px;height:19px;background:#fdfdfd;border:1px solid #0a74cf;border-radius:3px;box-sizing:border-box"></div><div class="t" style="left:918.00px;top:723.99px;font-size:11px;line-height:11px;font-weight:normal;color:#111;">OK</div><div class="r" style="left:968px;top:719px;width:60px;height:19px;background:#fbfbfb;border:1px solid #cfcfcf;border-radius:3px;box-sizing:border-box"></div><div class="t" style="left:980.00px;top:723.99px;font-size:11px;line-height:11px;font-weight:normal;color:#111;">Cancel</div><div class="r" style="left:999px;top:33px;width:168px;height:714px;background:#f8f8f8"></div><div class="r" style="left:677px;top:42px;width:228px;height:150px;background:#f8f8f8"></div><div class="r" style="left:677px;top:42px;width:228px;height:30px;background:#0562b2"></div><div class="r" style="left:677px;top:42px;width:1px;height:150px;background:#1c6cc0"></div><div class="t" style="left:685.40px;top:51.64px;font-size:12px;line-height:12px;font-weight:normal;color:#fff;-webkit-text-stroke:0;">Expert - MM Turbo</div><div class="r" style="left:725px;top:81px;width:180px;height:16px;background:#f3f3f3"></div><div class="r" style="left:684px;top:80px;width:42px;height:20px;background:#fafafa"></div><div class="r" style="left:771px;top:82px;width:1px;height:15px;background:#eaeaea"></div><div class="r" style="left:809px;top:82px;width:1px;height:15px;background:#eaeaea"></div><div class="t" style="left:691.00px;top:83.29px;font-size:11px;line-height:11px;font-weight:normal;color:#111;transform:scaleX(0.87);">About</div><div class="t" style="left:728.70px;top:84.79px;font-size:11px;line-height:11px;font-weight:normal;color:#111;transform:scaleX(0.87);">Common</div><div class="t" style="left:777.80px;top:84.79px;font-size:11px;line-height:11px;font-weight:normal;color:#111;transform:scaleX(0.87);">Inputs</div><div class="t" style="left:816.30px;top:84.79px;font-size:11px;line-height:11px;font-weight:normal;color:#111;transform:scaleX(0.87);">Dependencies</div><svg class="ic" style="left:710px;top:113px" width="40" height="60"><use href="#grad"/></svg><div class="t" style="left:771.20px;top:116.39px;font-size:11px;line-height:11px;font-weight:bold;color:#000;transform:scaleX(1.15);">MM Turbo 1.10</div><div class="t" style="left:772.00px;top:137.59px;font-size:11px;line-height:11px;font-weight:normal;color:#111;transform:scaleX(0.87);">Copyright 2025, GV Capital</div><div class="t" style="left:771.00px;top:158.89px;font-size:11px;line-height:11px;font-weight:normal;color:#111;transform:scaleX(0.91);">Update Gennaio 2025</div><div class=r style="left:0;top:0;width:1167px;height:750px;overflow:hidden"><svg class="r" style="left:0;top:0" width="1400" height="750">
<defs><filter id="sh" x="-20%" y="-20%" width="140%" height="140%"><feGaussianBlur stdDeviation="1.8"/></filter></defs>
<path d="M883.2,285.64 L845.2,191.1 L919.2,279.01 A253.8,138.7 0 1 1 883.2,285.64 Z" fill="#000" fill-opacity="0.3" stroke="#000" stroke-opacity="0.3" stroke-width="8" stroke-miterlimit="20" filter="url(#sh)"/>
<path d="M883.2,285.64 L845.2,191.1 L919.2,279.01 A253.8,138.7 0 1 1 883.2,285.64 Z" fill="#f7f7f7"/>
</svg><div class="r" style="left:0;top:0;width:1400px;height:750px;overflow:hidden;clip-path:ellipse(244.8px 129.7px at 982.0px 413.4px);background:#f7f7f7"><div class="r" style="left:0;top:0;width:1400px;height:750px;transform-origin:0 0;transform:translate(-649.5px,128.3px) scale(2)"><div class="r" style="left:555px;top:33px;width:444px;height:250px;background:#f3f3f3"></div><div class="r" style="left:572px;top:67px;width:426px;height:250px;background:#f9f9f9;border:1px solid #9a9a9a;box-sizing:border-box"></div><svg class="ic" style="left:575px;top:92px" width="16" height="16"><use href="#ic-123"/></svg><div class="t" style="left:595.00px;top:95.19px;font-size:11px;line-height:11px;font-weight:normal;color:#111;transform:scaleX(0.87);">Max simboli (0 = disabilitato)</div><div class="t" style="left:779.00px;top:95.19px;font-size:11px;line-height:11px;font-weight:normal;color:#111;transform:scaleX(0.87);">3</div><div class="r" style="left:573px;top:110px;width:406px;height:21px;background:#ebeaea;border-top:1px solid #d5d5d7;border-bottom:1px solid #d5d5d7;box-sizing:border-box"></div><svg class="ic" style="left:575px;top:112px" width="16" height="16"><use href="#ic-ab"/></svg><div class="t" style="left:595.00px;top:115.19px;font-size:11px;line-height:11px;font-weight:normal;color:#111;transform:scaleX(0.87);">Suffisso simboli Forex</div><div class="t" style="left:779.00px;top:115.19px;font-size:11px;line-height:11px;font-weight:normal;color:#111;transform:scaleX(0.87);">.</div><svg class="ic" style="left:575px;top:132px" width="16" height="16"><use href="#ic-g"/></svg><div class="t" style="left:595.00px;top:135.19px;font-size:11px;line-height:11px;font-weight:normal;color:#111;transform:scaleX(0.87);">AUDCAD</div><div class="t" style="left:779.00px;top:135.19px;font-size:11px;line-height:11px;font-weight:normal;color:#111;transform:scaleX(0.87);">false</div><div class="r" style="left:573px;top:150px;width:406px;height:21px;background:#ebeaea;border-top:1px solid #d5d5d7;border-bottom:1px solid #d5d5d7;box-sizing:border-box"></div><svg class="ic" style="left:575px;top:152px" width="16" height="16"><use href="#ic-g"/></svg><div class="t" style="left:595.00px;top:155.19px;font-size:11px;line-height:11px;font-weight:normal;color:#111;transform:scaleX(0.87);">AUDCHF</div><div class="t" style="left:779.00px;top:155.19px;font-size:11px;line-height:11px;font-weight:normal;color:#111;transform:scaleX(0.87);">false</div><svg class="ic" style="left:575px;top:172px" width="16" height="16"><use href="#ic-g"/></svg><div class="t" style="left:595.00px;top:175.69px;font-size:11px;line-height:11px;font-weight:normal;color:#111;transform:scaleX(0.87);">AUDJPY</div><div class="t" style="left:779.00px;top:175.69px;font-size:11px;line-height:11px;font-weight:normal;color:#111;transform:scaleX(0.87);">false</div><div class="r" style="left:573px;top:191px;width:406px;height:21px;background:#ebeaea;border-top:1px solid #d5d5d7;border-bottom:1px solid #d5d5d7;box-sizing:border-box"></div><svg class="ic" style="left:575px;top:193px" width="16" height="16"><use href="#ic-g"/></svg><div class="t" style="left:595.00px;top:196.19px;font-size:11px;line-height:11px;font-weight:normal;color:#111;transform:scaleX(0.87);">AUDNZD</div><div class="t" style="left:779.00px;top:196.19px;font-size:11px;line-height:11px;font-weight:normal;color:#111;transform:scaleX(0.87);">false</div><svg class="ic" style="left:575px;top:213px" width="16" height="16"><use href="#ic-g"/></svg><div class="t" style="left:595.00px;top:216.19px;font-size:11px;line-height:11px;font-weight:normal;color:#111;transform:scaleX(0.87);">AUDUSD</div><div class="t" style="left:779.00px;top:216.19px;font-size:11px;line-height:11px;font-weight:normal;color:#111;transform:scaleX(0.87);">false</div><div class="r" style="left:573px;top:231px;width:406px;height:20px;background:#0a74cf"></div><svg class="ic" style="left:575px;top:233px" width="16" height="16"><use href="#ic-g"/></svg><div class="t" style="left:595.00px;top:236.19px;font-size:11px;line-height:11px;font-weight:normal;color:#fff;transform:scaleX(0.87);">CADCHF</div><div class="t" style="left:779.00px;top:236.19px;font-size:11px;line-height:11px;font-weight:normal;color:#fff;transform:scaleX(0.87);">false</div><div class="r" style="left:776px;top:90px;width:1px;height:609px;background:#d4d4d4"></div><div class="r" style="left:677px;top:42px;width:228px;height:150px;background:#f8f8f8"></div><div class="r" style="left:677px;top:42px;width:228px;height:30px;background:#0562b2"></div><div class="r" style="left:677px;top:42px;width:1px;height:150px;background:#1c6cc0"></div><div class="t" style="left:685.40px;top:51.64px;font-size:12px;line-height:12px;font-weight:normal;color:#fff;-webkit-text-stroke:0;">Expert - MM Turbo</div><div class="r" style="left:725px;top:81px;width:180px;height:16px;background:#f3f3f3"></div><div class="r" style="left:684px;top:80px;width:42px;height:20px;background:#fafafa"></div><div class="r" style="left:771px;top:82px;width:1px;height:15px;background:#eaeaea"></div><div class="r" style="left:809px;top:82px;width:1px;height:15px;background:#eaeaea"></div><div class="t" style="left:691.00px;top:83.29px;font-size:11px;line-height:11px;font-weight:normal;color:#111;transform:scaleX(0.87);">About</div><div class="t" style="left:728.70px;top:84.79px;font-size:11px;line-height:11px;font-weight:normal;color:#111;transform:scaleX(0.87);">Common</div><div class="t" style="left:777.80px;top:84.79px;font-size:11px;line-height:11px;font-weight:normal;color:#111;transform:scaleX(0.87);">Inputs</div><div class="t" style="left:816.30px;top:84.79px;font-size:11px;line-height:11px;font-weight:normal;color:#111;transform:scaleX(0.87);">Dependencies</div><svg class="ic" style="left:710px;top:113px" width="40" height="60"><use href="#grad"/></svg><div class="t" style="left:771.20px;top:116.39px;font-size:11px;line-height:11px;font-weight:bold;color:#000;transform:scaleX(1.15);">MM Turbo 1.10</div><div class="t" style="left:772.00px;top:137.59px;font-size:11px;line-height:11px;font-weight:normal;color:#111;transform:scaleX(0.87);">Copyright 2025, GV Capital</div><div class="t" style="left:771.00px;top:158.89px;font-size:11px;line-height:11px;font-weight:normal;color:#111;transform:scaleX(0.91);">Update Gennaio 2025</div></div></div><svg class="r" style="left:0;top:0" width="1400" height="750">
<path d="M883.2,285.64 L845.2,191.1 L919.2,279.01 A253.8,138.7 0 1 1 883.2,285.64 Z" fill="none" stroke="#7ef31c" stroke-width="5.6" stroke-linejoin="miter" stroke-miterlimit="20"/>
</svg></div><div class=r style="left:230px;top:0;width:937px;height:750px;overflow:hidden"><div class=r style="left:-230px;top:0;width:1400px;height:750px"><div class="wm" style="left:104px;top:17px;-webkit-text-stroke:1px rgba(110,110,110,0.14)">FOREX4S.NET</div><div class="wm" style="left:145px;top:50px;-webkit-text-stroke:1px rgba(190,90,90,0.14)">FOREX4Y.COM</div><div class="wm" style="left:201px;top:83px;-webkit-text-stroke:1px rgba(60,170,170,0.14)">FOREX4Y</div><div class="wm" style="left:383px;top:17px;-webkit-text-stroke:1px rgba(110,110,110,0.14)">FOREX4S.NET</div><div class="wm" style="left:424px;top:50px;-webkit-text-stroke:1px rgba(190,90,90,0.14)">FOREX4Y.COM</div><div class="wm" style="left:480px;top:83px;-webkit-text-stroke:1px rgba(60,170,170,0.14)">FOREX4Y</div><div class="wm" style="left:662px;top:17px;-webkit-text-stroke:1px rgba(110,110,110,0.14)">FOREX4S.NET</div><div class="wm" style="left:703px;top:50px;-webkit-text-stroke:1px rgba(190,90,90,0.14)">FOREX4Y.COM</div><div class="wm" style="left:759px;top:83px;-webkit-text-stroke:1px rgba(60,170,170,0.14)">FOREX4Y.NET</div><div class="wm" style="left:941px;top:17px;-webkit-text-stroke:1px rgba(110,110,110,0.14)">FOREX4S.NET</div><div class="wm" style="left:982px;top:50px;-webkit-text-stroke:1px rgba(190,90,90,0.14)">FOREX4Y.COM</div><div class="wm" style="left:1038px;top:83px;-webkit-text-stroke:1px rgba(60,170,170,0.14)">FOREX4Y</div><div class="wm" style="left:1220px;top:17px;-webkit-text-stroke:1px rgba(110,110,110,0.14)">FOREX4S.NET</div><div class="wm" style="left:1261px;top:50px;-webkit-text-stroke:1px rgba(190,90,90,0.14)">FOREX4Y.COM</div><div class="wm" style="left:1317px;top:83px;-webkit-text-stroke:1px rgba(60,170,170,0.14)">FOREX4Y</div><div class="wm" style="left:108px;top:133px;-webkit-text-stroke:1px rgba(110,110,110,0.14)">FOREX4S.NET</div><div class="wm" style="left:149px;top:166px;-webkit-text-stroke:1px rgba(190,90,90,0.14)">FOREX4Y.COM</div><div class="wm" style="left:205px;top:199px;-webkit-text-stroke:1px rgba(60,170,170,0.14)">FOREX4Y</div><div class="wm" style="left:387px;top:133px;-webkit-text-stroke:1px rgba(110,110,110,0.14)">FOREX4S.NET</div><div class="wm" style="left:428px;top:166px;-webkit-text-stroke:1px rgba(190,90,90,0.14)">FOREX4Y.COM</div><div class="wm" style="left:484px;top:199px;-webkit-text-stroke:1px rgba(60,170,170,0.14)">FOREX4Y</div><div class="wm" style="left:666px;top:133px;-webkit-text-stroke:1px rgba(110,110,110,0.14)">FOREX4S.NET</div><div class="wm" style="left:707px;top:166px;-webkit-text-stroke:1px rgba(190,90,90,0.14)">FOREX4Y.COM</div><div class="wm" style="left:763px;top:199px;-webkit-text-stroke:1px rgba(60,170,170,0.14)">FOREX4Y.NET</div><div class="wm" style="left:945px;top:133px;-webkit-text-stroke:1px rgba(110,110,110,0.14)">FOREX4S.NET</div><div class="wm" style="left:986px;top:166px;-webkit-text-stroke:1px rgba(190,90,90,0.14)">FOREX4Y.COM</div><div class="wm" style="left:1042px;top:199px;-webkit-text-stroke:1px rgba(60,170,170,0.14)">FOREX4Y</div><div class="wm" style="left:1224px;top:133px;-webkit-text-stroke:1px rgba(110,110,110,0.14)">FOREX4S.NET</div><div class="wm" style="left:1265px;top:166px;-webkit-text-stroke:1px rgba(190,90,90,0.14)">FOREX4Y.COM</div><div class="wm" style="left:1321px;top:199px;-webkit-text-stroke:1px rgba(60,170,170,0.14)">FOREX4Y</div><div class="wm" style="left:104px;top:250px;-webkit-text-stroke:1px rgba(110,110,110,0.14)">FOREX4S.NET</div><div class="wm" style="left:145px;top:283px;-webkit-text-stroke:1px rgba(190,90,90,0.14)">FOREX4Y.COM</div><div class="wm" style="left:201px;top:316px;-webkit-text-stroke:1px rgba(60,170,170,0.14)">FOREX4Y</div><div class="wm" style="left:383px;top:250px;-webkit-text-stroke:1px rgba(110,110,110,0.14)">FOREX4S.NET</div><div class="wm" style="left:424px;top:283px;-webkit-text-stroke:1px rgba(190,90,90,0.14)">FOREX4Y.COM</div><div class="wm" style="left:480px;top:316px;-webkit-text-stroke:1px rgba(60,170,170,0.14)">FOREX4Y</div><div class="wm" style="left:662px;top:250px;-webkit-text-stroke:1px rgba(110,110,110,0.14)">FOREX4S.NET</div><div class="wm" style="left:703px;top:283px;-webkit-text-stroke:1px rgba(190,90,90,0.14)">FOREX4Y.COM</div><div class="wm" style="left:759px;top:316px;-webkit-text-stroke:1px rgba(60,170,170,0.14)">FOREX4Y.NET</div><div class="wm" style="left:941px;top:250px;-webkit-text-stroke:1px rgba(110,110,110,0.14)">FOREX4S.NET</div><div class="wm" style="left:982px;top:283px;-webkit-text-stroke:1px rgba(190,90,90,0.14)">FOREX4Y.COM</div><div class="wm" style="left:1038px;top:316px;-webkit-text-stroke:1px rgba(60,170,170,0.14)">FOREX4Y</div><div class="wm" style="left:1220px;top:250px;-webkit-text-stroke:1px rgba(110,110,110,0.14)">FOREX4S.NET</div><div class="wm" style="left:1261px;top:283px;-webkit-text-stroke:1px rgba(190,90,90,0.14)">FOREX4Y.COM</div><div class="wm" style="left:1317px;top:316px;-webkit-text-stroke:1px rgba(60,170,170,0.14)">FOREX4Y</div><div class="wm" style="left:106px;top:368px;-webkit-text-stroke:1px rgba(110,110,110,0.14)">FOREX4S.NET</div><div class="wm" style="left:147px;top:401px;-webkit-text-stroke:1px rgba(190,90,90,0.14)">FOREX4Y.COM</div><div class="wm" style="left:203px;top:434px;-webkit-text-stroke:1px rgba(60,170,170,0.14)">FOREX4Y</div><div class="wm" style="left:385px;top:368px;-webkit-text-stroke:1px rgba(110,110,110,0.14)">FOREX4S.NET</div><div class="wm" style="left:426px;top:401px;-webkit-text-stroke:1px rgba(190,90,90,0.14)">FOREX4Y.COM</div><div class="wm" style="left:482px;top:434px;-webkit-text-stroke:1px rgba(60,170,170,0.14)">FOREX4Y</div><div class="wm" style="left:664px;top:368px;-webkit-text-stroke:1px rgba(110,110,110,0.14)">FOREX4S.NET</div><div class="wm" style="left:705px;top:401px;-webkit-text-stroke:1px rgba(190,90,90,0.14)">FOREX4Y.COM</div><div class="wm" style="left:761px;top:434px;-webkit-text-stroke:1px rgba(60,170,170,0.14)">FOREX4Y.NET</div><div class="wm" style="left:943px;top:368px;-webkit-text-stroke:1px rgba(110,110,110,0.14)">FOREX4S.NET</div><div class="wm" style="left:984px;top:401px;-webkit-text-stroke:1px rgba(190,90,90,0.14)">FOREX4Y.COM</div><div class="wm" style="left:1040px;top:434px;-webkit-text-stroke:1px rgba(60,170,170,0.14)">FOREX4Y</div><div class="wm" style="left:1222px;top:368px;-webkit-text-stroke:1px rgba(110,110,110,0.14)">FOREX4S.NET</div><div class="wm" style="left:1263px;top:401px;-webkit-text-stroke:1px rgba(190,90,90,0.14)">FOREX4Y.COM</div><div class="wm" style="left:1319px;top:434px;-webkit-text-stroke:1px rgba(60,170,170,0.14)">FOREX4Y</div><div class="wm" style="left:113px;top:488px;-webkit-text-stroke:1px rgba(110,110,110,0.14)">FOREX4S.NET</div><div class="wm" style="left:154px;top:521px;-webkit-text-stroke:1px rgba(190,90,90,0.14)">FOREX4Y.COM</div><div class="wm" style="left:210px;top:554px;-webkit-text-stroke:1px rgba(60,170,170,0.14)">FOREX4Y</div><div class="wm" style="left:392px;top:488px;-webkit-text-stroke:1px rgba(110,110,110,0.14)">FOREX4S.NET</div><div class="wm" style="left:433px;top:521px;-webkit-text-stroke:1px rgba(190,90,90,0.14)">FOREX4Y.COM</div><div class="wm" style="left:489px;top:554px;-webkit-text-stroke:1px rgba(60,170,170,0.14)">FOREX4Y</div><div class="wm" style="left:671px;top:488px;-webkit-text-stroke:1px rgba(110,110,110,0.14)">FOREX4S.NET</div><div class="wm" style="left:712px;top:521px;-webkit-text-stroke:1px rgba(190,90,90,0.14)">FOREX4Y.COM</div><div class="wm" style="left:768px;top:554px;-webkit-text-stroke:1px rgba(60,170,170,0.14)">FOREX4Y.NET</div><div class="wm" style="left:950px;top:488px;-webkit-text-stroke:1px rgba(110,110,110,0.14)">FOREX4S.NET</div><div class="wm" style="left:991px;top:521px;-webkit-text-stroke:1px rgba(190,90,90,0.14)">FOREX4Y.COM</div><div class="wm" style="left:1047px;top:554px;-webkit-text-stroke:1px rgba(60,170,170,0.14)">FOREX4Y</div><div class="wm" style="left:1229px;top:488px;-webkit-text-stroke:1px rgba(110,110,110,0.14)">FOREX4S.NET</div><div class="wm" style="left:1270px;top:521px;-webkit-text-stroke:1px rgba(190,90,90,0.14)">FOREX4Y.COM</div><div class="wm" style="left:1326px;top:554px;-webkit-text-stroke:1px rgba(60,170,170,0.14)">FOREX4Y</div><div class="wm" style="left:112px;top:607px;-webkit-text-stroke:1px rgba(110,110,110,0.14)">FOREX4S.NET</div><div class="wm" style="left:153px;top:640px;-webkit-text-stroke:1px rgba(190,90,90,0.14)">FOREX4Y.COM</div><div class="wm" style="left:209px;top:673px;-webkit-text-stroke:1px rgba(60,170,170,0.14)">FOREX4Y</div><div class="wm" style="left:391px;top:607px;-webkit-text-stroke:1px rgba(110,110,110,0.14)">FOREX4S.NET</div><div class="wm" style="left:432px;top:640px;-webkit-text-stroke:1px rgba(190,90,90,0.14)">FOREX4Y.COM</div><div class="wm" style="left:488px;top:673px;-webkit-text-stroke:1px rgba(60,170,170,0.14)">FOREX4Y</div><div class="wm" style="left:670px;top:607px;-webkit-text-stroke:1px rgba(110,110,110,0.14)">FOREX4S.NET</div><div class="wm" style="left:711px;top:640px;-webkit-text-stroke:1px rgba(190,90,90,0.14)">FOREX4Y.COM</div><div class="wm" style="left:767px;top:673px;-webkit-text-stroke:1px rgba(60,170,170,0.14)">FOREX4Y.NET</div><div class="wm" style="left:949px;top:607px;-webkit-text-stroke:1px rgba(110,110,110,0.14)">FOREX4S.NET</div><div class="wm" style="left:990px;top:640px;-webkit-text-stroke:1px rgba(190,90,90,0.14)">FOREX4Y.COM</div><div class="wm" style="left:1046px;top:673px;-webkit-text-stroke:1px rgba(60,170,170,0.14)">FOREX4Y</div><div class="wm" style="left:1228px;top:607px;-webkit-text-stroke:1px rgba(110,110,110,0.14)">FOREX4S.NET</div><div class="wm" style="left:1269px;top:640px;-webkit-text-stroke:1px rgba(190,90,90,0.14)">FOREX4Y.COM</div><div class="wm" style="left:1325px;top:673px;-webkit-text-stroke:1px rgba(60,170,170,0.14)">FOREX4Y</div></div></div><div class="r" style="left:1167px;top:0px;width:3px;height:750px;background:#0a0a0a"></div><div class="r" style="left:230px;top:0px;width:940px;height:3px;background:#0a0a0a"></div><div class="r" style="left:230px;top:747px;width:940px;height:3px;background:#0a0a0a"></div></body></html>
